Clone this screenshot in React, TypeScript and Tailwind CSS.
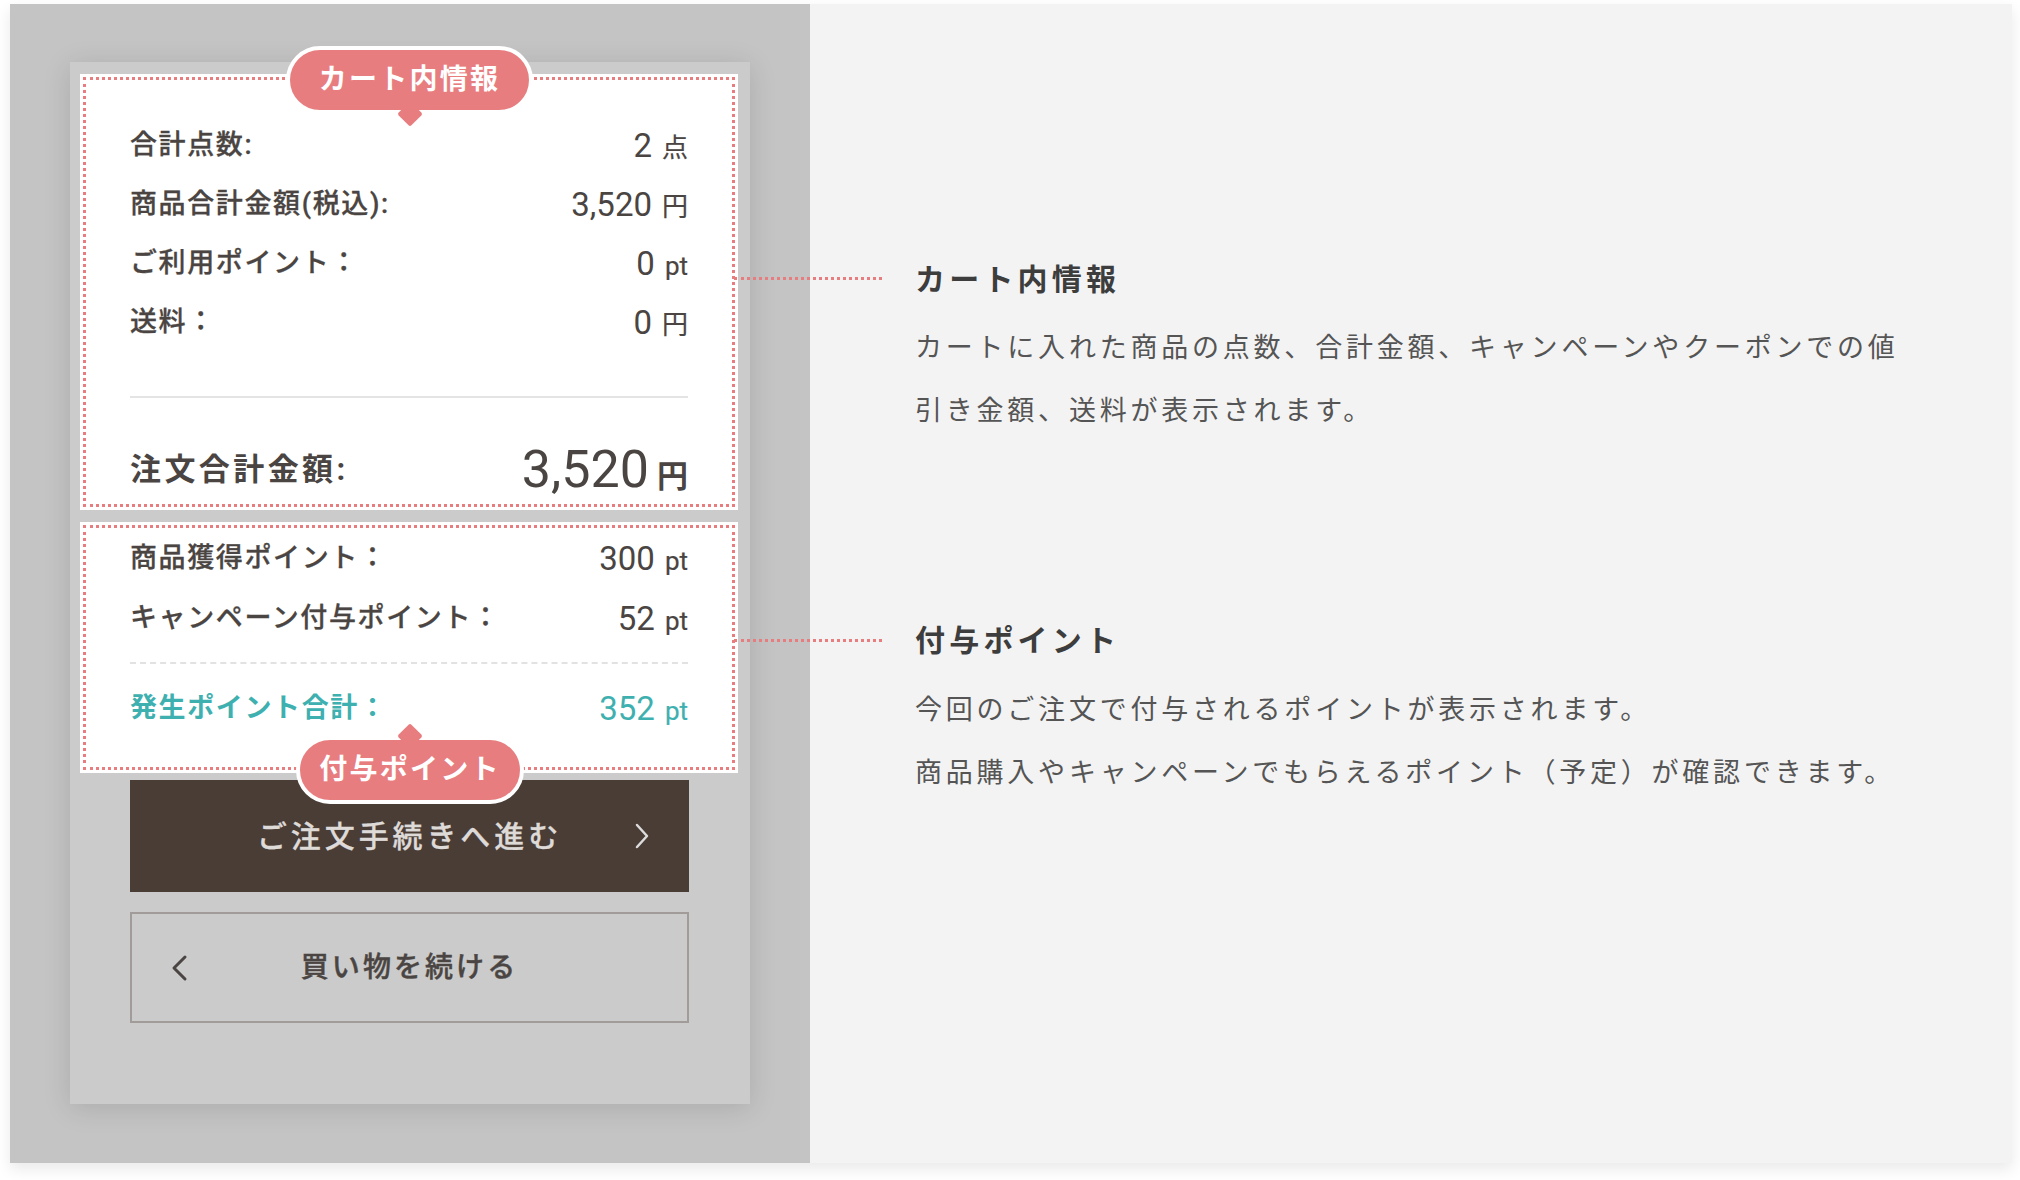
import type { ReactNode } from "react";

const pink = "#e87d7f";

function Row({
  label,
  value,
  unit,
  tone = "text-[#4a4542]",
  bold = false,
  height = "h-[59px]",
}: {
  label: string;
  value: string;
  unit: string;
  tone?: string;
  bold?: boolean;
  height?: string;
}) {
  return (
    <div className={`flex items-center justify-between ${height} ${tone}`}>
      <span
        className={`text-[27px] tracking-[0.06em] ${
          bold ? "font-bold" : "font-medium [-webkit-text-stroke:0.3px_currentColor]"
        }`}
      >
        {label}
      </span>
      <span className="flex items-baseline">
        <span className="text-[33px] leading-none">{value}</span>
        <span className="ml-[10px] text-[26px] leading-none [-webkit-text-stroke:0.2px_currentColor]">{unit}</span>
      </span>
    </div>
  );
}

function Badge({ children, tail, className }: { children: ReactNode; tail: "up" | "down"; className: string }) {
  return (
    <div className={`absolute z-10 ${className}`}>
      <div className="relative flex h-full w-full items-center justify-center rounded-full border-4 border-white bg-[#e87d7f]">
        <span
          className={`absolute left-1/2 h-[18px] w-[18px] -translate-x-1/2 rotate-45 rounded-[2px] bg-[#e87d7f] ${
            tail === "down" ? "bottom-[-13px]" : "top-[-13px]"
          }`}
        />
        <span className="relative text-[28px] font-bold tracking-[0.08em] text-white">{children}</span>
      </div>
    </div>
  );
}

function Connector({ className }: { className: string }) {
  return <div className={`absolute h-0 w-[148px] border-t-[3px] border-dotted border-[#e87d7f] ${className}`} />;
}

export default function App() {
  return (
    <div className="h-[1180px] w-[2020px] bg-white pl-[10px] pt-[4px] font-['Roboto','Noto_Sans_CJK_JP',sans-serif]">
      <div className="relative flex h-[1159px] w-[2002px] shadow-[0_6px_14px_rgba(0,0,0,0.09)]">
        {/* left: cart preview */}
        <div className="w-[800px] bg-[#c4c4c4] pl-[60px] pt-[58px]">
          <div className="relative h-[1042px] w-[680px] bg-[#cbcbcb] px-[10px] pt-[12px] shadow-[0_4px_26px_rgba(0,0,0,0.13)]">
            <Badge tail="down" className="left-[216px] top-[-16px] h-[68px] w-[247px]">
              カート内情報
            </Badge>

            <div className="w-[658px] bg-white p-[3px]">
              <div className="border-[3px] border-dotted px-[44px] pb-[4px] pt-[36px]" style={{ borderColor: pink }}>
                <Row label="合計点数:" value="2" unit="点" />
                <Row label="商品合計金額(税込):" value="3,520" unit="円" />
                <Row label="ご利用ポイント：" value="0" unit="pt" />
                <Row label="送料：" value="0" unit="円" />
                <div className="mt-[44px] h-[2px] bg-[#e4e4e4]" />
                <div className="mt-[42px] flex h-[60px] items-center justify-between text-[#4a4542]">
                  <span className="text-[31px] font-bold tracking-[0.11em]">注文合計金額:</span>
                  <span className="flex items-baseline">
                    <span className="text-[52px] leading-none">3,520</span>
                    <span className="ml-[8px] text-[31px] font-bold leading-none">円</span>
                  </span>
                </div>
              </div>
            </div>

            <div className="mt-[12px] w-[658px] bg-white p-[3px]">
              <div className="border-[3px] border-dotted px-[44px] pb-[29px]" style={{ borderColor: pink }}>
                <Row label="商品獲得ポイント：" value="300" unit="pt" height="h-[60px]" />
                <Row label="キャンペーン付与ポイント：" value="52" unit="pt" height="h-[60px]" />
                <div className="mt-[14px] border-t-2 border-dashed border-[#e2e2e2]" />
                <Row
                  label="発生ポイント合計："
                  value="352"
                  unit="pt"
                  tone="text-[#3fb0b0] mt-[14px]"
                  bold
                  height="h-[60px]"
                />
              </div>
            </div>

            <Badge tail="up" className="left-[226px] top-[674px] h-[68px] w-[228px]">
              付与ポイント
            </Badge>

            <button className="relative ml-[50px] mt-[7px] flex h-[112px] w-[559px] items-center justify-center bg-[#4a3d36] text-[30px] font-medium tracking-[0.13em] text-[#dedad8] [-webkit-text-stroke:0.3px_currentColor]">
              ご注文手続きへ進む
              <svg className="absolute right-[40px] top-1/2 -translate-y-1/2" width="14" height="26" viewBox="0 0 14 26" fill="none">
                <polyline points="2,2 12,13 2,24" stroke="#dcdcdc" strokeWidth="2.5" strokeLinecap="round" strokeLinejoin="round" />
              </svg>
            </button>

            <button className="relative ml-[50px] mt-[20px] flex h-[111px] w-[559px] items-center justify-center border-2 border-[#a19c99] text-[28px] font-medium tracking-[0.11em] text-[#4a4542] [-webkit-text-stroke:0.4px_currentColor]">
              <svg className="absolute left-[38px] top-1/2 -translate-y-1/2" width="18" height="28" viewBox="0 0 18 28" fill="none">
                <polyline points="15,3 4,14 15,25" stroke="#4a4542" strokeWidth="3" strokeLinecap="round" strokeLinejoin="round" />
              </svg>
              買い物を続ける
            </button>
          </div>
        </div>

        {/* right: descriptions */}
        <div className="flex-1 bg-[#f3f3f3] pl-[105px] pt-[256px] text-[#555]">
          <h2 className="text-[30px] font-bold leading-[40px] tracking-[0.14em] text-[#3d3d3d]">カート内情報</h2>
          <p className="mt-[17px] text-[27px] leading-[63px] tracking-[0.14em]">
            カートに入れた商品の点数、合計金額、キャンペーンやクーポンでの値
            <br />
            引き金額、送料が表示されます。
          </p>
          <h2 className="mt-[178px] text-[30px] font-bold leading-[40px] tracking-[0.14em] text-[#3d3d3d]">付与ポイント</h2>
          <p className="mt-[18px] text-[27px] leading-[63px] tracking-[0.14em]">
            今回のご注文で付与されるポイントが表示されます。
            <br />
            商品購入やキャンペーンでもらえるポイント（予定）が確認できます。
          </p>
        </div>

        <Connector className="left-[724px] top-[273px]" />
        <Connector className="left-[724px] top-[635px]" />
      </div>
    </div>
  );
}
